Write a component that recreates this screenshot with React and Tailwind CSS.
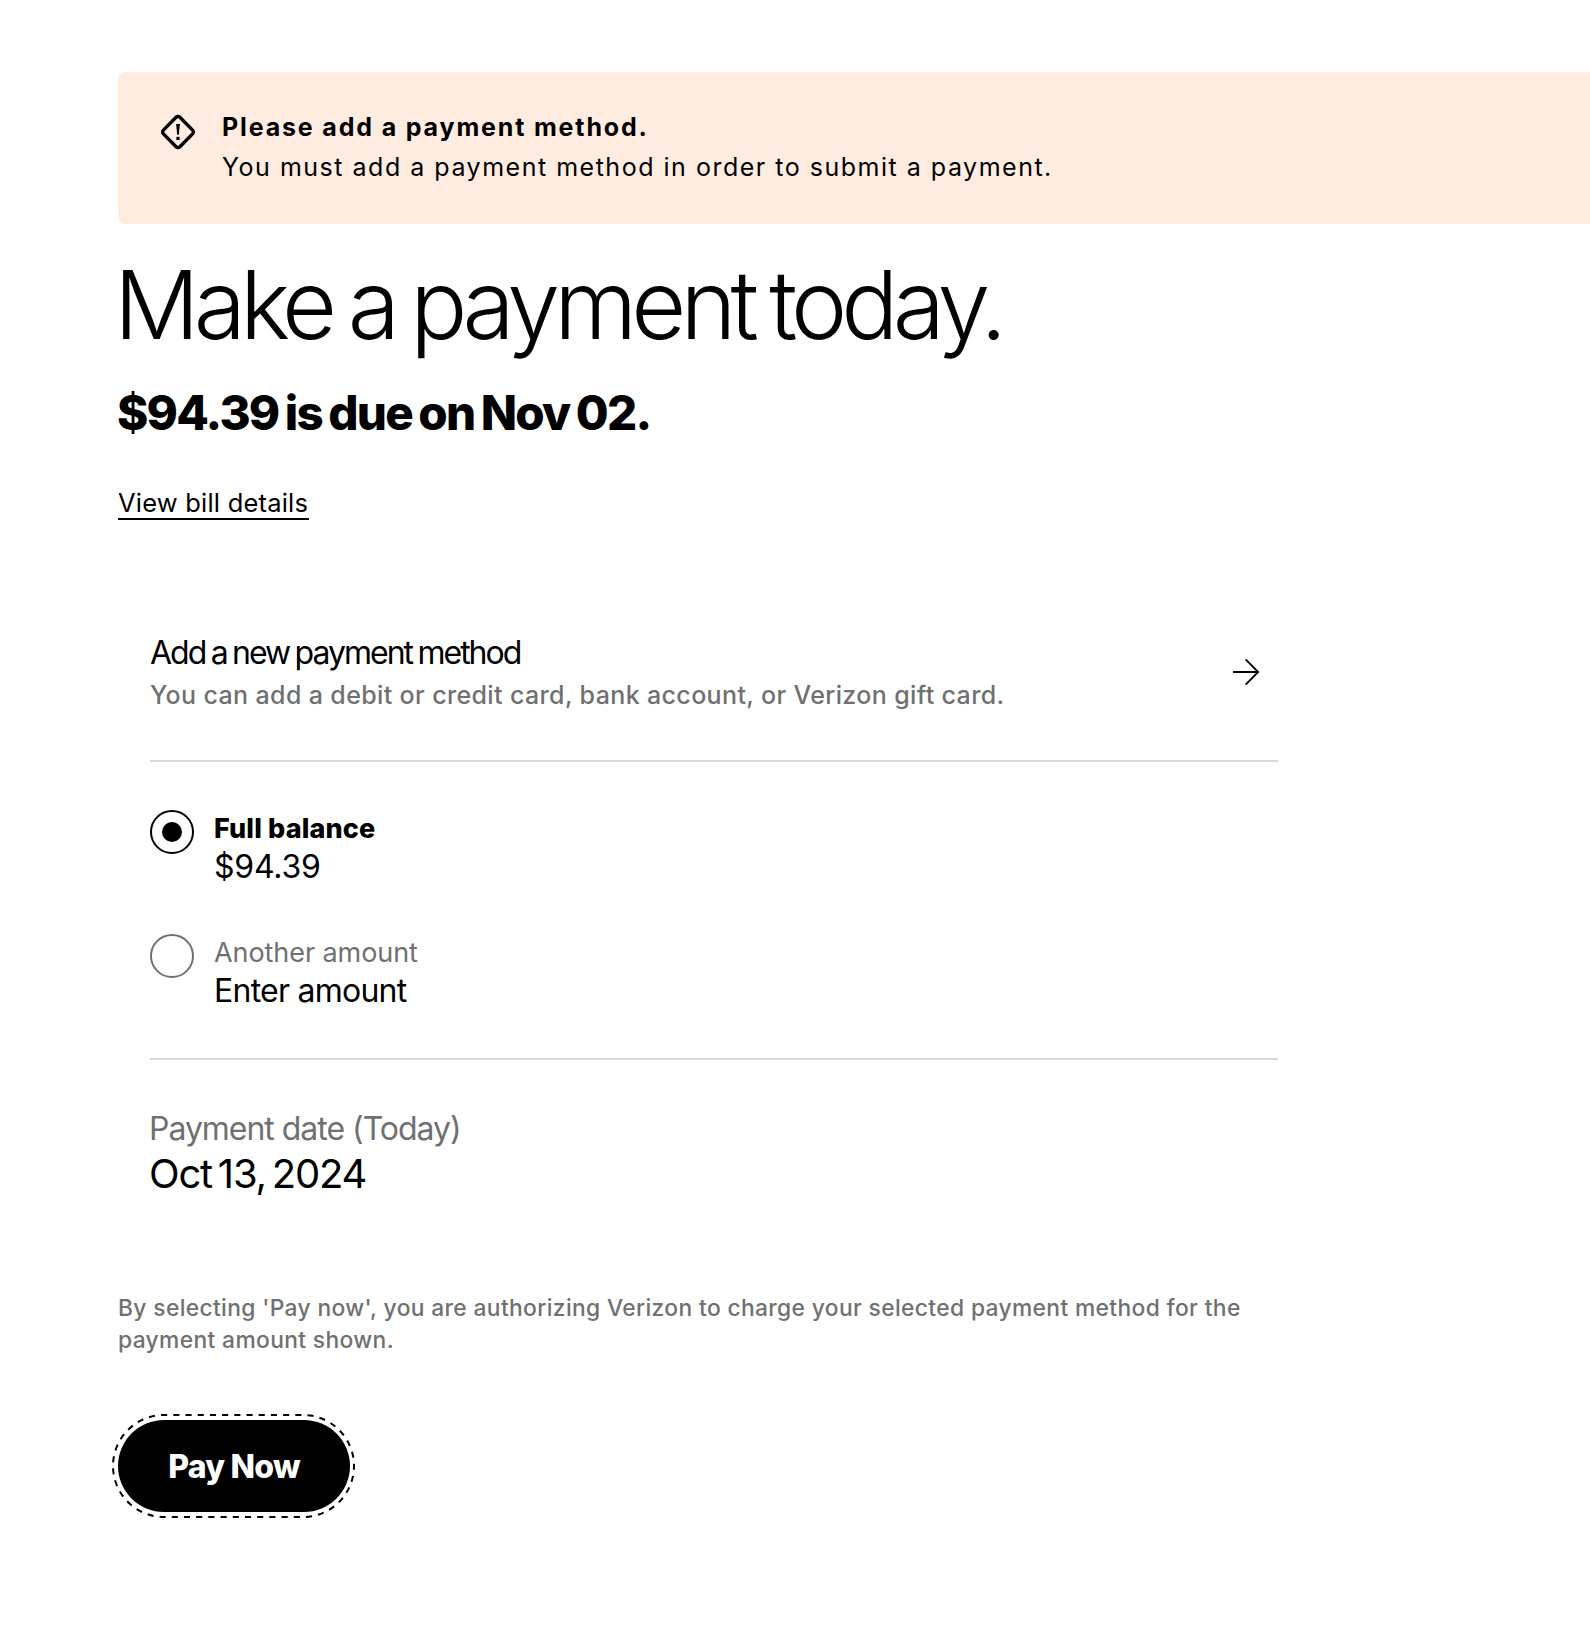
import React, { useState } from 'react';

const AlertIcon = () => (
  <svg className="mt-[42px] h-9 w-9 shrink-0" viewBox="0 0 36 36" fill="none" aria-hidden="true">
    <path
      d="M16.1 3.3a2.7 2.7 0 0 1 3.8 0L32.6 16.1a2.7 2.7 0 0 1 0 3.8L19.9 32.7a2.7 2.7 0 0 1-3.8 0L3.4 19.9a2.7 2.7 0 0 1 0-3.8Z"
      stroke="#000"
      strokeWidth="3.4"
    />
    <path d="M16.1 10h3.8l-1.1 10.8h-1.6Z" fill="#000" />
    <path d="M16.4 22.8h3.2V26h-3.2Z" fill="#000" />
  </svg>
);

const ArrowIcon = () => (
  <svg className="mb-0.5 mr-[18px] h-7 w-7 shrink-0" viewBox="0 0 28 28" fill="none" stroke="#000" strokeWidth="1.8" aria-hidden="true">
    <path d="M1 14h25M13.6 1.4 26.2 14 13.6 26.6" />
  </svg>
);

function AmountOption({ checked, onSelect, label, value, className }) {
  return (
    <button type="button" role="radio" aria-checked={checked} onClick={onSelect} className={`flex h-[76px] w-full items-start text-left ${className}`}>
      <span
        className={`flex h-11 w-11 shrink-0 items-center justify-center rounded-full border-2 ${checked ? 'border-black' : 'border-[#6f7171]'}`}
      >
        {checked && <span className="h-5 w-5 rounded-full bg-black" />}
      </span>
      <span className="ml-5 mt-px flex flex-col whitespace-nowrap">{label}{value}</span>
    </button>
  );
}

export default function App() {
  const [selected, setSelected] = useState('full');

  return (
    <div className="min-h-[1634px] overflow-hidden bg-white pl-[118px] pt-[72px] font-['Inter','Liberation_Sans',sans-serif] text-black">
      {/* Notification */}
      <div className="flex h-[152px] rounded-l-lg bg-[#ffece0] pl-[42px]">
        <AlertIcon />
        <div className="ml-[26px] whitespace-nowrap pt-[35px] text-[25px] leading-10">
          <p className="font-bold tracking-[1.84px]">Please add a payment method.</p>
          <p className="tracking-[1.51px]">You must add a payment method in order to submit a payment.</p>
        </div>
      </div>

      <h1 className="-ml-1 mt-[33px] whitespace-nowrap text-[95px] font-light leading-[96px] tracking-[-5.9px] [word-spacing:-4.4px]">
        Make a payment today.
      </h1>
      <h2 className="-ml-px mt-9 whitespace-nowrap text-[47.5px] font-extrabold leading-[48px] tracking-[-1.8px] [word-spacing:-2.2px]">
        $94.39 is due on Nov 02.
      </h2>
      <a href="#" className="mt-[51px] block w-[191px] whitespace-nowrap border-b-2 border-black text-[25.5px] leading-[30px] tracking-[0.21px]">
        View bill details
      </a>

      {/* Payment form */}
      <div className="ml-8 mt-[110px] w-[1128px]">
        <div className="flex items-center justify-between border-b-2 border-[#d8dada] pb-[45px]">
          <div className="whitespace-nowrap">
            <p className="text-[32px] leading-[45px] tracking-[-2px] [word-spacing:-1.6px]">Add a new payment method</p>
            <p className="text-[25px] font-medium leading-10 tracking-[0.365px] text-[#6f7171]">
              You can add a debit or credit card, bank account, or Verizon gift card.
            </p>
          </div>
          <ArrowIcon />
        </div>

        <div role="radiogroup" className="border-b-2 border-[#d8dada] py-12">
          <AmountOption
            checked={selected === 'full'}
            onSelect={() => setSelected('full')}
            label={<span className="text-[27px] font-extrabold leading-9 tracking-[0.15px]">Full balance</span>}
            value={<span className="text-[32px] leading-10 tracking-[-0.2px]">$94.39</span>}
            className=""
          />
          <AmountOption
            checked={selected === 'other'}
            onSelect={() => setSelected('other')}
            label={<span className="text-[27px] leading-9 tracking-[-0.07px] text-[#6f7171]">Another amount</span>}
            value={<span className="text-[32px] leading-10 tracking-[-0.75px]">Enter amount</span>}
            className="mt-12"
          />
        </div>

        <div className="-ml-px whitespace-nowrap pt-[49px]">
          <p className="text-[32px] leading-10 tracking-[-1.024px] text-[#6f7171]">Payment date (Today)</p>
          <p className="mt-px text-[40px] leading-[48px] tracking-[-1.2px] [word-spacing:-4.1px]">Oct 13, 2024</p>
        </div>
      </div>

      <p className="mt-[94px] whitespace-nowrap text-[22.8px] font-medium leading-8 tracking-[0.36px] text-[#6f7171]">
        By selecting 'Pay now', you are authorizing Verizon to charge your selected payment method for the
        <br />
        payment amount shown.
      </p>

      <button
        type="button"
        className="relative mt-16 flex h-[92px] w-[232px] items-center justify-center whitespace-nowrap rounded-full bg-black pt-0.5 text-[32px] font-extrabold leading-10 tracking-[-0.75px] text-white outline-none"
      >
        Pay Now
        {/* focus ring */}
        <svg className="absolute -left-1.5 -top-1.5 h-[104px] w-[243px]" viewBox="0 0 243 104" fill="none" aria-hidden="true">
          <rect x="1" y="1" width="241" height="102" rx="51" stroke="#000" strokeWidth="2" strokeDasharray="6.1 6.1" strokeDashoffset="-9.3" />
        </svg>
      </button>
    </div>
  );
}
